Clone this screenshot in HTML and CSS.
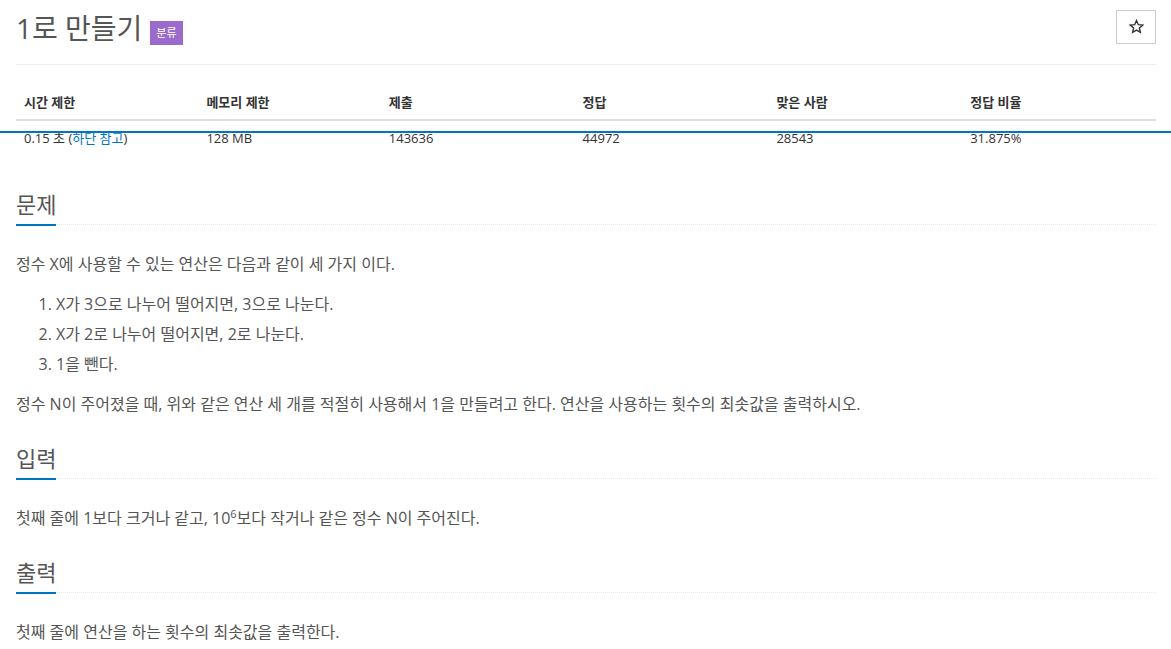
FILE: index.html
```html
<!DOCTYPE html>
<html lang="ko">
<head>
  <meta charset="UTF-8">
  <meta name="viewport" content="width=device-width, initial-scale=1.0">
  <title>1로 만들기</title>
  <link rel="stylesheet" href="styles.css">
</head>
<body>

  <div class="scroll-bar"></div>

  <div class="container">
    <div class="page-header">
      <h1>
        <span class="problem-title">1로 만들기</span>
        <span class="label-tag">분류</span>
      </h1>
      <button class="star-btn" type="button" aria-label="즐겨찾기">
        <svg width="15" height="15" viewBox="0 0 24 24">
          <path d="M12 2.5l2.9 6.6 7.1.6-5.4 4.7 1.6 7-6.2-3.7-6.2 3.7 1.6-7L2 9.7l7.1-.6z" fill="none" stroke="#333" stroke-width="2.2" stroke-linejoin="miter"/>
        </svg>
      </button>
    </div>

    <table class="problem-info">
      <colgroup>
        <col class="col-narrow">
        <col class="col-narrow">
        <col class="col-wide">
        <col class="col-wide">
        <col class="col-wide">
        <col class="col-wide">
      </colgroup>
      <thead>
        <tr>
          <th>시간 제한</th>
          <th>메모리 제한</th>
          <th>제출</th>
          <th>정답</th>
          <th>맞은 사람</th>
          <th>정답 비율</th>
        </tr>
      </thead>
      <tbody>
        <tr>
          <td>0.15 초 (<a href="#limit">하단 참고</a>)</td>
          <td>128 MB</td>
          <td>143636</td>
          <td>44972</td>
          <td>28543</td>
          <td>31.875%</td>
        </tr>
      </tbody>
    </table>

    <section class="problem-section">
      <div class="headline"><h2>문제</h2></div>
      <div class="problem-text">
        <p>정수 X에 사용할 수 있는 연산은 다음과 같이 세 가지 이다.</p>
        <ol>
          <li>X가 3으로 나누어 떨어지면, 3으로 나눈다.</li>
          <li>X가 2로 나누어 떨어지면, 2로 나눈다.</li>
          <li>1을 뺀다.</li>
        </ol>
        <p>정수 N이 주어졌을 때, 위와 같은 연산 세 개를 적절히 사용해서 1을 만들려고 한다. 연산을 사용하는 횟수의 최솟값을 출력하시오.</p>
      </div>
    </section>

    <section class="problem-section">
      <div class="headline"><h2>입력</h2></div>
      <div class="problem-text">
        <p>첫째 줄에 1보다 크거나 같고, 10<sup>6</sup>보다 작거나 같은 정수 N이 주어진다.</p>
      </div>
    </section>

    <section class="problem-section">
      <div class="headline"><h2>출력</h2></div>
      <div class="problem-text">
        <p>첫째 줄에 연산을 하는 횟수의 최솟값을 출력한다.</p>
      </div>
    </section>
  </div>

</body>
</html>
```

FILE: styles.css
```css
* {
  box-sizing: border-box;
}

body {
  font-family: "Open Sans", "Noto Sans CJK KR", sans-serif;
  font-size: 13px;
  line-height: 1.42857;
  color: #333;
  margin: 0;
  padding: 0;
  background-color: #fff;
}

.container {
  padding: 0 15px 0 16px;
}

/* blue progress line lying over the table */
.scroll-bar {
  position: absolute;
  left: 0;
  right: 0;
  top: 131px;
  height: 2px;
  background-color: #0076c0;
}

.page-header {
  display: flex;
  justify-content: space-between;
  align-items: flex-start;
  padding: 10px 0 19px;
  border-bottom: 1px solid #eee;
  margin-bottom: 20px;
}

.page-header h1 {
  margin: 0;
  font-size: 28px;
  font-weight: 400;
  line-height: 34px;
  color: #555;
  display: flex;
  align-items: center;
}

.label-tag {
  display: inline-block;
  margin: 11px 0 0 8px;
  padding: 0 6px;
  height: 24px;
  line-height: 24px;
  font-size: 11px;
  color: #fff;
  background-color: #9b6bcc;
}

.star-btn {
  display: flex;
  align-items: center;
  justify-content: center;
  width: 40px;
  height: 34px;
  border: 1px solid #ccc;
  background: #fff;
  padding: 0 0 2px;
}

.problem-info {
  width: 100%;
  table-layout: fixed;
  border-collapse: collapse;
  margin-bottom: 35px;
}

.problem-info .col-narrow {
  width: 16%;
}

.problem-info .col-wide {
  width: 17%;
}

.problem-info th,
.problem-info td {
  padding: 8px;
  text-align: left;
  line-height: 18px;
}

.problem-info th {
  font-weight: 700;
  border-bottom: 2px solid #ddd;
}

.problem-info a {
  color: #0076c0;
  text-decoration: none;
}

.problem-section {
  margin-bottom: 25px;
}

.headline {
  margin: 10px 0 24px;
  border-bottom: 1px dotted #e4e9f0;
}

.headline h2 {
  display: inline-block;
  margin: 0 0 -2px;
  padding-bottom: 6px;
  font-size: 22px;
  font-weight: 400;
  line-height: 28px;
  color: #555;
  border-bottom: 2px solid #0076c0;
}

.problem-text {
  font-size: 16px;
  line-height: 30px;
  color: #555;
}

.problem-text p {
  margin: 0 0 10px;
}

.problem-text ol {
  margin: 0 0 10px;
  padding-left: 40px;
}

.problem-text sup {
  font-size: 11px;
  line-height: 0;
}
```
